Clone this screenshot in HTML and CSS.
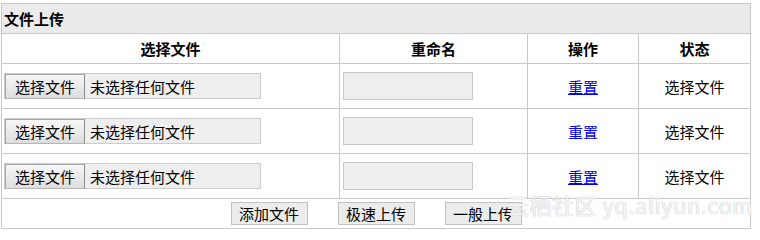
FILE: index.html
```html
<!DOCTYPE html>
<html lang="zh-CN">
<head>
<meta charset="utf-8">
<title>文件上传</title>
<link rel="stylesheet" href="styles.css">
</head>
<body>
<div class="page">
  <table class="upload">
    <colgroup>
      <col class="c-file">
      <col class="c-name">
      <col class="c-op">
      <col class="c-state">
    </colgroup>
    <thead>
      <tr class="r-title"><th colspan="4" class="title">文件上传</th></tr>
      <tr class="r-head"><th>选择文件</th><th>重命名</th><th>操作</th><th>状态</th></tr>
    </thead>
    <tbody>
      <tr class="r-data">
        <td class="cell-file"><span class="file"><span class="file-btn">选择文件</span><span class="file-txt">未选择任何文件</span></span></td>
        <td class="cell-name"><input class="rename" type="text"></td>
        <td class="cell-center"><a href="#" class="reset">重置</a></td>
        <td class="cell-center">选择文件</td>
      </tr>
      <tr class="r-data">
        <td class="cell-file"><span class="file"><span class="file-btn">选择文件</span><span class="file-txt">未选择任何文件</span></span></td>
        <td class="cell-name"><input class="rename" type="text"></td>
        <td class="cell-center"><a href="#" class="reset reset-plain">重置</a></td>
        <td class="cell-center">选择文件</td>
      </tr>
      <tr class="r-data">
        <td class="cell-file"><span class="file"><span class="file-btn">选择文件</span><span class="file-txt">未选择任何文件</span></span></td>
        <td class="cell-name"><input class="rename" type="text"></td>
        <td class="cell-center"><a href="#" class="reset">重置</a></td>
        <td class="cell-center">选择文件</td>
      </tr>
    </tbody>
    <tfoot>
      <tr class="r-foot">
        <td colspan="4">
          <div class="actions">
            <button class="act" type="button">添加文件</button>
            <button class="act" type="button">极速上传</button>
            <button class="act" type="button">一般上传</button>
          </div>
        </td>
      </tr>
    </tfoot>
  </table>
  <div class="watermark">云栖社区 yq.aliyun.com</div>
</div>
</body>
</html>
```

FILE: styles.css
```css
* { box-sizing: border-box; }
html, body { margin: 0; padding: 0; background: #fff; }
body {
  font-family: "Noto Sans CJK SC", "Liberation Sans", sans-serif;
  font-size: 15px;
  color: #000;
}
.page {
  position: relative;
  width: 760px;
  height: 232px;
  padding: 3px 0 0 1px;
}
.upload {
  border-collapse: collapse;
  table-layout: fixed;
  width: 750px;
}
.upload th, .upload td {
  border: 1px solid #c8c8c8;
  padding: 0;
  line-height: 1;
  vertical-align: middle;
}
.c-file { width: 338px; }
.c-name { width: 188px; }
.c-op { width: 111px; }
.c-state { width: 112px; }

.r-title, .r-head, .r-foot { height: 30px; }
.r-data { height: 45px; }

.upload .title {
  background: #ebebeb;
  text-align: left;
  padding-left: 2px;
  font-weight: bold;
}
.r-head th {
  font-weight: bold;
  text-align: center;
}
.upload .cell-file { padding-left: 2px; }
.upload .cell-name { padding-left: 3px; }
.cell-center { text-align: center; }

.file {
  display: inline-flex;
  align-items: stretch;
  width: 257px;
  height: 26px;
  border: 1px solid #cccccc;
  background: #eeeeee;
  vertical-align: middle;
}
.file-btn {
  display: flex;
  align-items: center;
  justify-content: center;
  width: 80px;
  border: 1px solid #a6a6a6;
  border-right-color: #8a8a8a;
  border-bottom-color: #b5b5b5;
  background: linear-gradient(#f7f7f7, #dddddd);
  margin: 0 0 -1px 0;
}
.file-txt {
  display: flex;
  align-items: center;
  padding-left: 5px;
}
.rename {
  display: block;
  width: 130px;
  height: 28px;
  border: 1px solid #c8c8c8;
  background: #eeeeee;
  margin: 0;
  padding: 0;
  font: inherit;
}
.reset {
  color: #0000ee;
  text-decoration: underline;
}
.reset-plain { text-decoration: none; }

.actions {
  display: flex;
  justify-content: center;
  gap: 30px;
}
.act {
  width: 77px;
  height: 23px;
  border: 1px solid #c2c2c2;
  background: #ececec;
  font: inherit;
  color: #000;
  padding: 0;
  line-height: 1;
}
.watermark {
  position: absolute;
  left: 507px;
  top: 193px;
  font-family: "Noto Sans CJK SC", "Liberation Sans", sans-serif;
  font-size: 22px;
  letter-spacing: 0.5px;
  line-height: 1;
  color: rgba(255, 255, 255, 0.85);
  text-shadow: 0 0 1px #c4c4c4, 0 0 1px #c4c4c4;
  white-space: nowrap;
}
```
